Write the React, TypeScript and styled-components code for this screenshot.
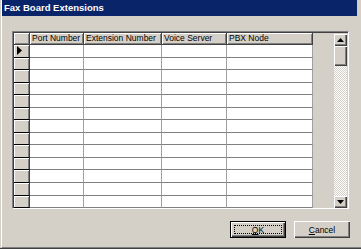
import { Fragment } from "react";
import styled, { createGlobalStyle, css } from "styled-components";

const GlobalStyle = createGlobalStyle`
	html, body { margin: 0; padding: 0; background: #d4d0c8; }
	body { width: 361px; height: 249px; overflow: hidden; font-family: "Liberation Sans", Arial, sans-serif; }
`;

const columns = ["Port Number", "Extension Number", "Voice Server", "PBX Node"];
const ROWS = 13;

const raised = css`
	background: #d4d0c8;
	box-shadow: inset 1px 1px #ffffff, inset -1px -1px #404040, inset -2px -2px #808080;
`;

const Window = styled.div`
	width: 361px;
	height: 249px;
	box-sizing: border-box;
	background: #d4d0c8;
	padding-left: 1px;
	border-bottom: 1px solid #404040;
	display: flex;
`;

const Frame = styled.div`
	flex: 1;
	display: flex;
	flex-direction: column;
	border-left: 1px solid #ffffff;
	border-bottom: 1px solid #808080;
`;

const TitleBar = styled.div`
	height: 16px;
	margin-right: 4px;
	background: #0a246a;
	color: #ffffff;
	font-weight: bold;
	font-size: 9.5px;
	line-height: 16px;
	padding-left: 2px;
	white-space: nowrap;
`;

const Body = styled.div`
	flex: 1;
	display: flex;
	flex-direction: column;
	padding: 15px 12px 0 10px;
`;

const GridBox = styled.div`
	height: 178px;
	box-sizing: border-box;
	display: flex;
	border-top: 1px solid #808080;
	border-left: 1px solid #808080;
	border-right: 1px solid #ffffff;
	border-bottom: 1px solid #ffffff;
	box-shadow: inset 1px 1px #404040;
	padding: 1px 0 0 1px;
	overflow: hidden;
`;

const Table = styled.div`
	flex: 1;
	display: grid;
	grid-template-columns: 16px 54px 78px 65px 86px;
	grid-template-rows: 12px;
	grid-auto-rows: 12.55px;
	align-content: start;
	font-size: 8.5px;
	overflow: hidden;
`;

const HeadCell = styled.div`
	box-sizing: border-box;
	background: #d4d0c8;
	border-right: 1px solid #404040;
	border-bottom: 1px solid #404040;
	box-shadow: inset 1px 1px #ffffff, inset -1px -1px #808080;
	padding: 0 2px;
	line-height: 11px;
	white-space: nowrap;
	overflow: hidden;
	color: #000;
`;

const RowHead = styled.div`
	box-sizing: border-box;
	background: #d4d0c8;
	border-right: 1px solid #404040;
	border-bottom: 1px solid #000000;
	box-shadow: inset 1px 1px #ffffff, inset -1px 0 #808080;
	display: flex;
	align-items: center;
	padding-left: 3px;
`;

const Cell = styled.div`
	box-sizing: border-box;
	background: #ffffff;
	border-right: 1px solid #a0a0a0;
	border-bottom: 1px solid #808080;
`;

const ScrollBar = styled.div`
	width: 13px;
	margin-right: 1px;
	padding-top: 1px;
	display: flex;
	flex-direction: column;
`;

const ScrollButton = styled.div`
	${raised}
	height: 12px;
	display: flex;
	align-items: center;
	justify-content: center;
`;

const Thumb = styled.div`
	${raised}
	height: 20px;
`;

const Track = styled.div`
	flex: 1;
	background: repeating-conic-gradient(#ffffff 0 25%, #d4d0c8 0 50%) 0 0 / 2px 2px;
`;

const ButtonRow = styled.div`
	display: flex;
	justify-content: flex-end;
	gap: 8px;
	margin-top: 12px;
	margin-right: -1px;
`;

const Button = styled.div<{ $default?: boolean }>`
	${raised}
	position: relative;
	width: 56px;
	height: 17px;
	box-sizing: border-box;
	border: 1px solid ${(p) => (p.$default ? "#000000" : "#d4d0c8")};
	font-size: 8.5px;
	display: flex;
	align-items: center;
	justify-content: center;
	color: #000;
	${(p) =>
		!p.$default &&
		css`
			border: none;
			box-shadow: inset 1px 1px #ffffff, inset -1px -1px #404040, inset -2px -2px #808080;
		`}

	&::after {
		content: "";
		display: ${(p) => (p.$default ? "block" : "none")};
		position: absolute;
		inset: 3px;
		border: 1px dotted #000;
	}
`;

function Arrow({ dir }: { dir: "up" | "down" | "right" }) {
	if (dir === "right") {
		return (
			<svg width="5" height="9" viewBox="0 0 5 9">
				<path d="M0 0 L5 4.5 L0 9 Z" fill="#000" />
			</svg>
		);
	}
	return (
		<svg width="7" height="4" viewBox="0 0 7 4">
			<path d={dir === "up" ? "M0 4 L3.5 0 L7 4 Z" : "M0 0 L3.5 4 L7 0 Z"} fill="#000" />
		</svg>
	);
}

export default function App() {
	return (
		<>
			<GlobalStyle />
			<Window>
				<Frame>
					<TitleBar>Fax Board Extensions</TitleBar>
					<Body>
						<GridBox>
							<Table>
								<HeadCell />
								{columns.map((c) => (
									<HeadCell key={c}>{c}</HeadCell>
								))}
								{Array.from({ length: ROWS }).map((_, r) => (
									<Fragment key={r}>
										<RowHead>{r === 0 && <Arrow dir="right" />}</RowHead>
										{columns.map((c) => (
											<Cell key={c} />
										))}
									</Fragment>
								))}
							</Table>
							<ScrollBar>
								<ScrollButton>
									<Arrow dir="up" />
								</ScrollButton>
								<Thumb />
								<Track />
								<ScrollButton>
									<Arrow dir="down" />
								</ScrollButton>
							</ScrollBar>
						</GridBox>
						<ButtonRow>
							<Button $default>
								<u>O</u>K
							</Button>
							<Button>
								<u>C</u>ancel
							</Button>
						</ButtonRow>
					</Body>
				</Frame>
			</Window>
		</>
	);
}
